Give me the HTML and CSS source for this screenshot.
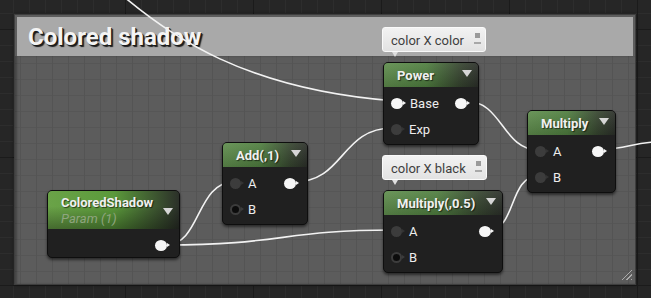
FILE: index.html
```html
<!DOCTYPE html>
<html>
<head>
    <title>Colored shadow - Material Graph</title>
    <link rel="stylesheet" href="styles.css">
</head>
<body>
    <div class="canvas">
        <!-- comment box -->
        <div class="comment">
            <div class="comment-head">Colored shadow</div>
            <div class="comment-body"></div>
            <div class="grip"></div>
        </div>

        <!-- wires sit under the nodes -->
        <svg class="wires" width="651" height="298" viewBox="0 0 651 298">
            <path d="M105 -20 C170 40, 250 90, 395 101" />
            <path d="M466 101 C502 101, 503 150, 538 150" />
            <path d="M603 149 C625 149, 632 143, 655 142" />
            <path d="M294 182 C345 182, 340 128, 393 128" />
            <path d="M166 245 C201 245, 196 182, 234 182" />
            <path d="M166 245 C280 245, 285 230, 393 230" />
            <path d="M489 230 C516 230, 509 176, 538 176" />
        </svg>

        <div class="bubble bubble-power">color X color<span class="bubble-icon"></span></div>
        <div class="bubble bubble-mul">color X black<span class="bubble-icon"></span></div>

        <div class="node n-param">
            <div class="node-head head-param">
                <div class="titles">
                    <div class="title">ColoredShadow</div>
                    <div class="sub">Param (1)</div>
                </div>
                <span class="arrow"></span>
            </div>
            <div class="node-body">
                <div class="row"><span></span><span class="pin on"></span></div>
            </div>
        </div>

        <div class="node n-add">
            <div class="node-head"><span class="title">Add(,1)</span><span class="arrow"></span></div>
            <div class="node-body">
                <div class="row"><span class="in"><span class="pin dim"></span>A</span><span class="pin on"></span></div>
                <div class="row"><span class="in"><span class="pin ring"></span>B</span></div>
            </div>
        </div>

        <div class="node n-power">
            <div class="node-head"><span class="title">Power</span><span class="arrow"></span></div>
            <div class="node-body">
                <div class="row"><span class="in"><span class="pin on"></span>Base</span><span class="pin on"></span></div>
                <div class="row"><span class="in"><span class="pin dim"></span>Exp</span></div>
            </div>
        </div>

        <div class="node n-mulhalf">
            <div class="node-head"><span class="title">Multiply(,0.5)</span><span class="arrow"></span></div>
            <div class="node-body">
                <div class="row"><span class="in"><span class="pin dim"></span>A</span><span class="pin on"></span></div>
                <div class="row"><span class="in"><span class="pin ring"></span>B</span></div>
            </div>
        </div>

        <div class="node n-mul">
            <div class="node-head"><span class="title">Multiply</span><span class="arrow"></span></div>
            <div class="node-body">
                <div class="row"><span class="in"><span class="pin dim"></span>A</span><span class="pin on"></span></div>
                <div class="row"><span class="in"><span class="pin dim"></span>B</span></div>
            </div>
        </div>
    </div>
</body>
</html>
```

FILE: styles.css
```css
body {
    margin: 0;
    padding: 0;
    overflow: hidden;
    font-family: Roboto, "Liberation Sans", sans-serif;
}

.canvas {
    position: relative;
    width: 651px;
    height: 298px;
    background-color: #262626;
    background-image:
        linear-gradient(to right, #1b1b1b 1px, transparent 1px),
        linear-gradient(to bottom, #1b1b1b 1px, transparent 1px),
        linear-gradient(to right, #2d2d2d 1px, transparent 1px),
        linear-gradient(to bottom, #2d2d2d 1px, transparent 1px);
    background-size: 128px 128px, 128px 128px, 16px 16px, 16px 16px;
    background-position: 125px 29px, 125px 29px, 13px 13px, 13px 13px;
    overflow: hidden;
}

/* comment box */
.comment {
    position: absolute;
    left: 14px;
    top: 14px;
    width: 622px;
    height: 271px;
    display: flex;
    flex-direction: column;
    border: 1px solid #3e3e3e;
    box-sizing: border-box;
    box-shadow: 0 0 3px rgba(0, 0, 0, 0.5);
}

.comment-head {
    height: 39px;
    background: #a9a9a9;
    border: 2px solid #5d5d5d;
    border-bottom: none;
    padding-left: 11px;
    font-size: 24px;
    font-weight: bold;
    line-height: 40px;
    color: #f4f4f4;
    text-shadow: 2px 2px 1px #1c1c1c, 1px 1px 0 #1c1c1c;
}

.comment-body {
    flex: 1;
    background-color: #5c5c5c;
    background-image:
        linear-gradient(to right, #545454 1px, transparent 1px),
        linear-gradient(to bottom, #565656 1px, transparent 1px);
    background-size: 16px 16px;
    background-position: 5px 7px;
    box-shadow: inset 2px 0 2px rgba(0, 0, 0, 0.25);
}

.grip {
    position: absolute;
    right: 3px;
    bottom: 4px;
    width: 13px;
    height: 13px;
    background: repeating-linear-gradient(135deg, transparent 0 2px, #bdbdbd 2px 3px);
    clip-path: polygon(100% 0, 100% 100%, 0 100%);
    opacity: 0.8;
}

.wires {
    position: absolute;
    left: 0;
    top: 0;
}

.wires path {
    fill: none;
    stroke: #f2f2f2;
    stroke-width: 1.6;
}

/* node comment bubbles */
.bubble {
    position: absolute;
    height: 25px;
    box-sizing: border-box;
    padding-left: 8px;
    font-size: 13px;
    line-height: 25px;
    color: #3e3e3e;
    background: linear-gradient(#f2f2f2, #e2e2e2);
    border: 1px solid #fafafa;
    border-radius: 3px;
}

.bubble::after {
    content: "";
    position: absolute;
    left: 9px;
    bottom: -6px;
    border-left: 3px solid transparent;
    border-right: 3px solid transparent;
    border-top: 5px solid #e0e0e0;
}

.bubble-icon {
    position: absolute;
    right: 4px;
    top: 4px;
    width: 7px;
    height: 14px;
    background:
        linear-gradient(#9a9a9a, #9a9a9a) 1px 1px / 5px 5px no-repeat,
        linear-gradient(#a8a8a8, #a8a8a8) 0 10px / 7px 2px no-repeat;
}

.bubble-power {
    left: 382px;
    top: 27px;
    width: 104px;
}

.bubble-mul {
    left: 382px;
    top: 155px;
    width: 105px;
}

/* nodes */
.node {
    position: absolute;
    background: #202020;
    border: 1px solid #0e0e0e;
    border-radius: 5px;
    box-shadow: 0 2px 3px rgba(0, 0, 0, 0.55);
    overflow: hidden;
    color: #ededed;
}

.node-head {
    height: 24px;
    display: flex;
    align-items: center;
    justify-content: space-between;
    padding: 0 6px 0 13px;
    background:
        linear-gradient(to bottom, rgba(255, 255, 255, 0.08), rgba(0, 0, 0, 0.15)),
        linear-gradient(to right, #5f8d4d 0%, #4f7e3f 45%, #36452f 80%, #2b2f29 100%);
}

.title {
    font-size: 13px;
    font-weight: bold;
    color: #f0f0f0;
    text-shadow: 1px 1px 1px rgba(0, 0, 0, 0.6);
}

.arrow {
    width: 0;
    height: 0;
    border-left: 5px solid transparent;
    border-right: 5px solid transparent;
    border-top: 7px solid #d6d6d6;
    margin-top: -4px;
}

.head-param {
    height: 38px;
    align-items: flex-start;
    padding-top: 4px;
    box-sizing: border-box;
    background:
        linear-gradient(to bottom, rgba(0, 0, 0, 0) 40%, rgba(0, 0, 0, 0.35)),
        linear-gradient(to right, #6aa348 0%, #5b9a3b 50%, #3f5a31 80%, #2b3029 100%);
}

.head-param .arrow {
    margin-top: 13px;
}

.sub {
    font-size: 13px;
    font-style: italic;
    color: #8fa57f;
    margin-top: 1px;
}

.node-body {
    padding: 3px 0 2px;
}

.row {
    height: 26px;
    display: flex;
    align-items: center;
    justify-content: space-between;
    padding: 0 11px 0 7px;
    font-size: 13px;
}

.in {
    display: flex;
    align-items: center;
    gap: 7px;
}

.pin {
    position: relative;
    width: 11px;
    height: 11px;
    border-radius: 50%;
    box-sizing: border-box;
}

.pin::after {
    content: "";
    position: absolute;
    right: -3px;
    top: 3px;
    border-top: 2.5px solid transparent;
    border-bottom: 2.5px solid transparent;
    border-left: 3px solid #f4f4f4;
}

.pin.on {
    width: 12px;
    background: #f6f6f6;
}

.pin.dim {
    background: #3c3c3c;
}

.pin.dim::after {
    border-left-color: #343434;
}

.pin.ring {
    background: #0c0c0c;
    border: 2px solid #3c3c3c;
}

.pin.ring::after {
    top: 1px;
    right: -5px;
    border-left-color: #3c3c3c;
}

.n-param {
    left: 47px;
    top: 190px;
    width: 131px;
    height: 66px;
}

.n-param .row {
    padding-right: 12px;
}

.n-add {
    left: 222px;
    top: 142px;
    width: 84px;
}

.n-power {
    left: 383px;
    top: 62px;
    width: 94px;
}

.n-mulhalf {
    left: 383px;
    top: 190px;
    width: 118px;
}

.n-mul {
    left: 527px;
    top: 110px;
    width: 87px;
}
```
